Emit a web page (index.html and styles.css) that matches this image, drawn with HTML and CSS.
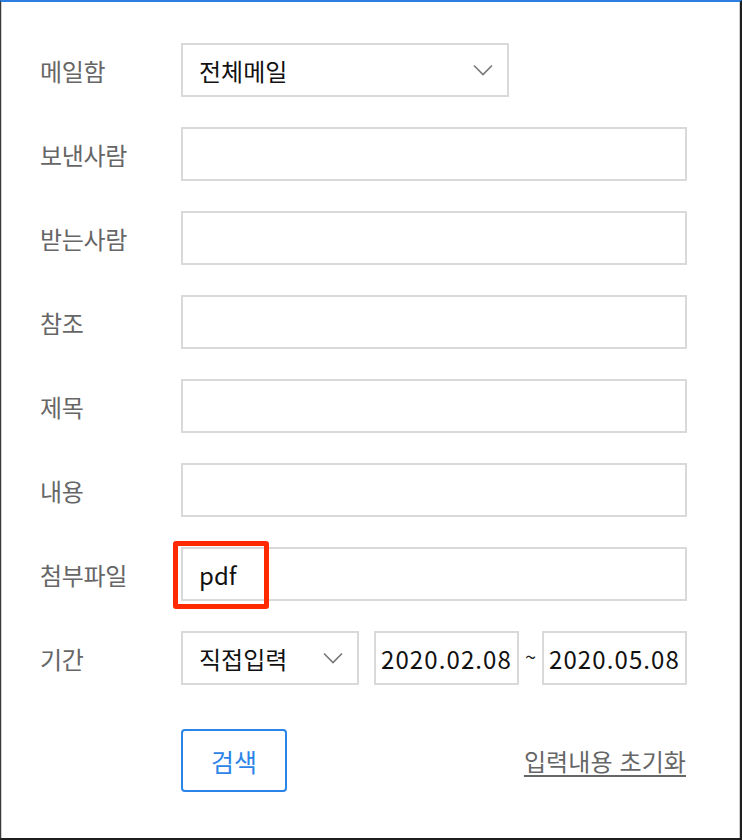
FILE: index.html
```html
<!DOCTYPE html>
<html lang="ko">
<head>
<meta charset="utf-8">
<title>메일 검색</title>
<link rel="stylesheet" href="styles.css">
</head>
<body>
<div class="frame">
  <form class="form">
    <div class="row">
      <span class="label">메일함</span>
      <div class="box select wide">
        <span class="value">전체메일</span>
        <svg class="chev" width="20" height="12" viewBox="0 0 20 12"><path d="M1 1.5 L10 10.5 L19 1.5" fill="none" stroke="#777" stroke-width="1.6"/></svg>
      </div>
    </div>
    <div class="row"><span class="label">보낸사람</span><div class="box full"></div></div>
    <div class="row"><span class="label">받는사람</span><div class="box full"></div></div>
    <div class="row"><span class="label">참조</span><div class="box full"></div></div>
    <div class="row"><span class="label">제목</span><div class="box full"></div></div>
    <div class="row"><span class="label">내용</span><div class="box full"></div></div>
    <div class="row"><span class="label">첨부파일</span>
      <div class="box full attach"><span class="value">pdf</span><span class="highlight"></span></div>
    </div>
    <div class="row"><span class="label">기간</span>
      <div class="box select period">
        <span class="value">직접입력</span>
        <svg class="chev" width="20" height="12" viewBox="0 0 20 12"><path d="M1 1.5 L10 10.5 L19 1.5" fill="none" stroke="#777" stroke-width="1.6"/></svg>
      </div>
      <div class="box date first"><span class="value">2020.02.08</span></div>
      <span class="tilde">~</span>
      <div class="box date"><span class="value">2020.05.08</span></div>
    </div>
    <div class="actions">
      <button type="button" class="search">검색</button>
      <a class="reset" href="#">입력내용 초기화</a>
    </div>
  </form>
</div>
</body>
</html>
```
FILE: styles.css
```css
* { box-sizing: border-box; }
html, body { margin: 0; padding: 0; background: #fff; }
body { font-family: "Noto Sans CJK KR", "Noto Sans", sans-serif; }
.frame {
  width: 742px;
  height: 840px;
  border-top: 2px solid #2b7de0;
  border-left: 1px solid #3a3a3a;
  border-right: 2px solid #1e1e1e;
  border-bottom: 2px solid #1e1e1e;
  box-shadow: inset 1px 0 0 #cfcfcf, inset -1px 0 0 #cfcfcf;
  padding: 41px 0 0 39px;
}
.form { display: flex; flex-direction: column; gap: 30px; }
.row { display: flex; align-items: center; height: 54px; }
.label { width: 141px; font-size: 24px; color: #666; letter-spacing: -0.3px; }
.box {
  position: relative;
  height: 54px;
  border: 2px solid #d9d9d9;
  background: #fff;
  display: flex;
  align-items: center;
  font-size: 24px;
  color: #111;
}
.full { width: 506px; padding-left: 16px; }
.select { justify-content: space-between; padding: 0 14px 0 16px; }
.wide { width: 328px; }
.period { width: 178px; }
.date { width: 145px; padding-left: 5px; letter-spacing: 1.1px; }
.date.first { margin-left: 15px; }
.chev { display: block; }
.tilde { width: 23px; text-align: center; font-size: 20px; color: #222; padding-bottom: 4px; }
.highlight {
  position: absolute;
  left: -10px;
  top: -8px;
  width: 96px;
  height: 68px;
  border: 5px solid #ff2a00;
  border-radius: 3px;
}
.actions {
  display: flex;
  align-items: center;
  justify-content: space-between;
  width: 647px;
  padding-left: 141px;
  margin-top: 14px;
}
.search {
  width: 106px;
  height: 63px;
  border: 2px solid #2b84e8;
  border-radius: 4px;
  background: #fff;
  color: #2b84e8;
  font-family: inherit;
  font-size: 25px;
  padding: 0;
  cursor: pointer;
}
.reset { font-size: 24px; color: #666; text-decoration: underline; text-underline-offset: 4px; padding-right: 1px; letter-spacing: 0.1px; }
```
